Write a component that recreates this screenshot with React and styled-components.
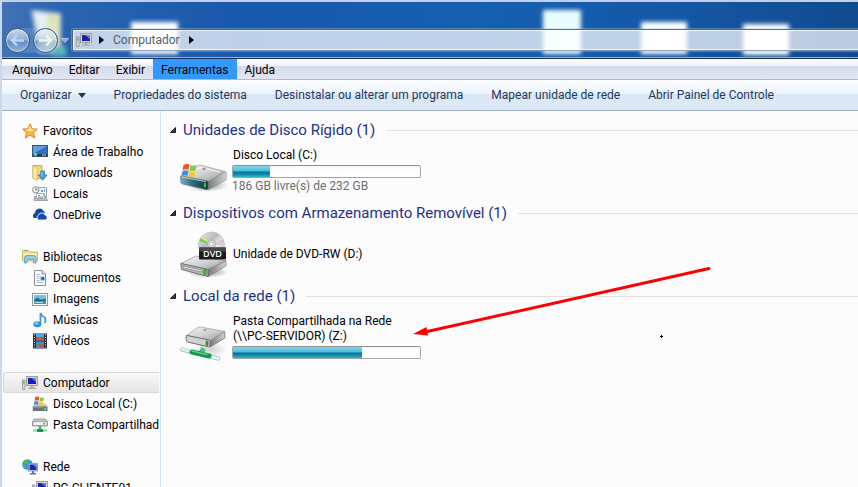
import React from "react";
import styled, { createGlobalStyle } from "styled-components";

const GlobalStyle = createGlobalStyle`
  * {
    box-sizing: border-box;
  }
  body {
    margin: 0;
    font-family: Roboto, "Open Sans", sans-serif;
    font-size: 12px;
    line-height: 15px;
    color: #000;
  }
  button {
    font: inherit;
    color: inherit;
    border: none;
    background: none;
    padding: 0;
  }
  a {
    color: inherit;
    text-decoration: none;
  }
  ul {
    list-style: none;
    margin: 0;
    padding: 0;
  }
  svg {
    display: block;
    flex: none;
  }
`;

const Janela = styled.div`
  display: flex;
  flex-direction: column;
  height: 100vh;
  overflow: hidden;
  border-top: 2px solid #c3cfe3;
  border-left: 2px solid #ccd9ed;
  background-color: #fcfcfc;
`;

const BarraTitulo = styled.header`
  position: relative;
  flex: none;
  padding: 25px 0 5px 3px;
  border-bottom: 1px solid #17304f;
  box-shadow: inset 0 -1px 0 #8db5e2;
  background: linear-gradient(90deg, #4372b5 0, #2a64b0 60px, #1858ad 240px, #1660b0 480px, #1558a8 660px, #114b8f 100%);
`;

const Fundo = styled.svg`
  position: absolute;
  left: 0;
  top: 0;
  width: 100%;
  height: 55px;
`;

const LinhaEndereco = styled.div`
  position: relative;
  display: flex;
  align-items: center;
  height: 26px;
`;

const Navegacao = styled.div`
  display: flex;
  align-items: center;
  gap: 3px;
  border-radius: 13px;
  background-color: rgba(150, 190, 230, 0.25);
`;

const BotaoNav = styled.button`
  display: flex;
  align-items: center;
  justify-content: center;
  width: 25px;
  height: 25px;
  border-radius: 50%;
  border: 1px solid #33557f;
  background: linear-gradient(
    rgba(240, 246, 252, 0.75),
    rgba(200, 218, 240, 0.5) 48%,
    rgba(120, 160, 205, 0.4) 52%,
    rgba(190, 220, 245, 0.55)
  );
  box-shadow: inset 0 0 0 1px rgba(255, 255, 255, 0.55);
`;

const BotaoHistorico = styled.button`
  display: flex;
  justify-content: center;
  width: 13px;
`;

const Endereco = styled.nav`
  display: flex;
  flex: 1;
  align-items: center;
  height: 22px;
  margin-left: 1px;
  padding-left: 3px;
  border: 1px solid rgba(20, 35, 50, 0.65);
  border-bottom-color: rgba(20, 50, 90, 0.45);
  border-right: none;
  border-radius: 2px 0 0 2px;
  background-color: rgba(255, 255, 255, 0.72);
  box-shadow: inset 1px 1px 0 rgba(255, 255, 255, 0.8), inset 0 -1px 0 rgba(255, 255, 255, 0.8),
    0 0 0 1px rgba(160, 200, 240, 0.4);
`;

const Caminho = styled.a`
  margin: 0 9px;
  color: #53606f;
`;

const SetaCaminho = styled.svg`
  margin-left: ${(props) => (props.$inicio ? "7px" : "0")};
`;

const BarraMenu = styled.nav`
  display: flex;
  flex: none;
  height: 21px;
  padding-left: 2px;
  border-bottom: 1px solid #b4bacb;
  background: linear-gradient(#fff, #eff1f9 7px, #d4daed 7px, #e3e7f5);
`;

const ItemMenu = styled.button`
  padding: 2px 8px 0;
  background-color: ${(props) => (props.$ativo ? "#3399ff" : "transparent")};
`;

const BarraComandos = styled.div`
  display: flex;
  flex: none;
  height: 31px;
  padding-left: 4px;
  border-bottom: 1px solid #a0afc3;
  background: linear-gradient(#fbfdff, #ecf4fc 14px, #dce7f5 14px, #dde9f7);
`;

const Comando = styled.button`
  display: flex;
  align-items: center;
  gap: 6px;
  padding: 0 14px;
  white-space: nowrap;
  color: #1e395b;
`;

const Corpo = styled.div`
  display: flex;
  flex: 1;
  min-height: 0;
`;

const Lateral = styled.nav`
  flex: none;
  width: 159px;
  padding: 9px 1px 0;
  overflow: hidden;
  line-height: 16px;
  border-right: 1px solid #d2e4f7;
`;

const Grupo = styled.ul`
  margin-bottom: 21px;
`;

const LinkLateral = styled.a`
  display: flex;
  align-items: center;
  gap: 5px;
  height: 21px;
  padding-top: 1px;
  padding-left: ${(props) => (props.$raiz ? "18px" : "28px")};
  overflow: hidden;
  white-space: nowrap;
  border: 1px solid ${(props) => (props.$ativo ? "#d9d9d9" : "transparent")};
  border-right: none;
  border-radius: 3px 0 0 3px;
  background: ${(props) => (props.$ativo ? "linear-gradient(#f8f8f8, #e5e5e5)" : "none")};
`;

const Conteudo = styled.main`
  position: relative;
  flex: 1;
  min-width: 0;
  padding: 9px 0 0 9px;
`;

const Secao = styled.section`
  height: 83px;
`;

const Titulo = styled.h2`
  display: flex;
  align-items: center;
  gap: 7px;
  height: 20px;
  margin: 0;
  font-size: 15px;
  font-weight: 400;
  line-height: 20px;
  color: #1e3287;
  white-space: nowrap;

  &::after {
    content: "";
    flex: 1;
    height: 1px;
    margin-left: 4px;
    background-color: #e2e2e2;
  }
`;

const Unidade = styled.a`
  display: flex;
  align-items: center;
  gap: 4px;
  width: 260px;
  height: 48px;
  margin: 7px 0 0 10px;
`;

const Detalhes = styled.div`
  width: 189px;
`;

const Nome = styled.div`
  padding-left: 1px;
`;

const Capacidade = styled.div`
  height: 13px;
  margin: 2px 0 1px;
  border: 1px solid #a5a5a5;
  border-top-color: #8f8f8f;
  border-radius: 2px;
  overflow: hidden;
  background: linear-gradient(#f6f6f6, #fff 4px);
`;

const Usado = styled.div`
  height: 100%;
  background: linear-gradient(#86d3e8, #45bddb 48%, #04708f 52%, #0d8bab 75%, #2db4d2);
`;

const Livre = styled.div`
  color: #6d6d6d;
`;

const Anotacao = styled.svg`
  position: absolute;
  left: 250px;
  top: 152px;
  pointer-events: none;
`;

const Cursor = styled(Anotacao)`
  left: 499px;
  top: 224px;
`;

function Icone({ tamanho = 16, children }) {
  return (
    <svg width={tamanho} height={tamanho} viewBox={`0 0 ${tamanho} ${tamanho}`} aria-hidden="true">
      {children}
    </svg>
  );
}

const Bandeira = () => (
  <>
    <path d="M1 2 Q4 0 7 1.6 L6 7 Q3.500 5.500 0 7z" fill="#e8562a" />
    <path d="M8 2 Q11 3.500 14 2 L13 7.500 Q10 9 7 7.300z" fill="#8cc63f" />
    <path d="M0 8 Q3 6.500 6 8 L5 13 Q2.500 11.500 -1 13z" fill="#3f8fd8" />
    <path d="M7 8.400 Q10 10 13 8.500 L12 13.500 Q9 15 6 13.500z" fill="#fbc62c" />
  </>
);

const IconeEstrela = () => (
  <Icone>
    <path d="M8 .8 L10.200 5.700 L15.400 6.200 L11.500 9.700 L12.800 15 L8 12.200 L3.200 15 L4.500 9.700 L.6 6.200 L5.800 5.700z" fill="#fdb83a" stroke="#e0862a" strokeLinejoin="round" />
    <path d="M8 2.500 L9.500 6.500 L13.500 7 L8 8.500 L3 7 L6.500 6.500z" fill="#ffe79a" />
  </Icone>
);

const IconeAreaTrabalho = () => (
  <Icone>
    <rect x=".5" y="1.500" width="15" height="11" fill="#2f6fc0" stroke="#40536e" />
    <path d="M1 2 H15 L1 10z" fill="#5f9fe0" />
    <rect x="1" y="10" width="14" height="2" fill="#22364f" />
    <circle cx="3.500" cy="10.500" r="1.800" fill="#43c3e8" />
    <path d="M3 10h1v1h-1z" fill="#f6d04a" />
    <path d="M10 11h4" stroke="#c7d7ea" />
  </Icone>
);

const IconeDownloads = () => (
  <Icone>
    <path d="M1 .5 H10 V13.500 H1z" fill="#f2d77a" stroke="#cfaa48" />
    <path d="M1 1 L5 2.500 V15.500 L1 13z" fill="#fbeeb4" stroke="#d3b155" strokeWidth=".7" />
    <path d="M8.800 6 H12.500 V10 H15 L10.700 15.300 L6.300 10 H8.800z" fill="#3e9fe0" stroke="#2174b8" strokeWidth=".8" />
    <path d="M10 6.500v5" stroke="#92d0f7" />
  </Icone>
);

const IconeLocais = () => (
  <Icone>
    <path d="M5.500 1.500 H14.500 V11 H5.500z" fill="#f4f6f8" stroke="#9aa2aa" />
    <path d="M2.500 10.500 H13.500 L15.500 14.500 H2z" fill="#b9bec4" stroke="#858b92" strokeWidth=".7" />
    <path d="M4.500 7.500h8v5h-8z" fill="#edf3f7" stroke="#8f99a3" strokeWidth=".7" />
    <path d="M6 9.500h2M6 11.200h5" stroke="#58a9a6" />
    <path d="M9 4h2v2h-2z" fill="#4fa8dd" />
    <path d="M12.500 3v3M12 8v2" stroke="#58a9dd" />
    <circle cx="3.800" cy="3.800" r="3.200" fill="#f3f3f3" stroke="#8c8c8c" />
    <path d="M3.800 2v2h1.700" fill="none" stroke="#555" strokeWidth=".8" />
  </Icone>
);

const IconeOneDrive = () => (
  <Icone>
    <path d="M1.800 11 A3 3 0 0 1 3 6 A4.500 4.500 0 0 1 11.500 4 A4 4 0 0 1 13 5.500 L8 11z" fill="#1549a0" />
    <path d="M6.500 13 A2.600 2.600 0 0 1 6.200 8.500 A3.600 3.600 0 0 1 12.800 7.800 A2.700 2.700 0 0 1 13.500 13z" fill="#0f4db0" stroke="#fcfcfc" strokeWidth=".9" />
  </Icone>
);

const IconeBibliotecas = () => (
  <Icone>
    <path d="M.5 1.500 H6.500 L7.500 3 H15.500 V12 H.5z" fill="#f6e193" stroke="#d9b656" />
    <path d="M2 1.700h4" stroke="#5cb85c" />
    <path d="M2 5.500h12" stroke="#fff6cf" />
    <path d="M2.500 14 V9.500 Q2.500 6.500 5 6.500 H11.500 Q14 6.500 14 9.500 V14 H11.500 V11.500 Q11.500 10.500 10.500 10.500 H6 Q5 10.500 5 11.500 V14z" fill="#8fcdf0" stroke="#4a9ccd" strokeWidth=".8" />
  </Icone>
);

const IconeDocumento = () => (
  <Icone>
    <path d="M2.500 .5 H10 L13.500 4 V15.500 H2.500z" fill="#fff" stroke="#8a8f96" />
    <path d="M10 .5 V4 H13.500" fill="#e1e5ea" stroke="#8a8f96" />
    <path d="M4.500 4.500h4M4.500 6.500h3M4.500 8.500h3M4.500 10.500h3M4.500 12.500h7" stroke="#a5b4c8" />
    <path d="M8.500 6.500h4v4h-4z" fill="#4f97d6" />
    <path d="M10 7.500h2v2h-2z" fill="#164a8c" />
  </Icone>
);

const IconeImagem = () => (
  <Icone>
    <rect x=".5" y="2.500" width="15" height="12" fill="#fff" stroke="#8f959c" />
    <rect x="2" y="4" width="12" height="9" fill="#6cc3ef" />
    <path d="M2 9 L5 6.500 L9 8.500 L14 7.500 V10 H2z" fill="#26757a" />
    <path d="M2 10h12v3H2z" fill="#3c8fc4" />
    <path d="M3 11.500h8" stroke="#b6e0f3" />
  </Icone>
);

const IconeMusica = () => (
  <Icone>
    <path d="M8.500 12 V1 Q10 4.500 12.500 5.500 Q14.500 7.500 12.500 11" fill="none" stroke="#3f97d6" strokeWidth="1.800" />
    <ellipse cx="5.300" cy="12.300" rx="4" ry="3" fill="#2f8fd5" />
    <ellipse cx="4.600" cy="11.500" rx="2" ry="1.200" fill="#8bcaf2" />
  </Icone>
);

const IconeVideo = () => (
  <Icone>
    <rect x="1" y=".5" width="14" height="15" fill="#2b2f35" />
    <rect x="4" y="1" width="8" height="6.500" fill="#5aa4dd" />
    <rect x="4" y="8.500" width="8" height="6.500" fill="#4390cf" />
    <path d="M4 3 L7 5 L10 3.500 L12 5 V7.500 H9 L7 6 L5 7.500 H4zM5 10 L8 12 L11 10 L12 13 L9 15 L7 13z" fill="#b8573f" />
    <path d="M2.500 1.500v13M13.500 1.500v13" stroke="#f0f0f0" strokeDasharray="1 1.500" />
  </Icone>
);

const IconeComputador = () => (
  <Icone>
    <rect x=".5" y="5" width="2.500" height="9.500" fill="#d5d8da" stroke="#85898c" strokeWidth=".7" />
    <path d="M1 6.500h1.500v2h-1.500z" fill="#57b947" />
    <rect x="4.500" y="1.500" width="11" height="9" fill="#d9d6cf" stroke="#a29f98" />
    <rect x="6" y="3" width="8" height="6" fill="#1022b4" />
    <path d="M9 3 H14 V7z" fill="#5e7fea" />
    <path d="M8.500 11h3v1.500h2.500v1.500h-8v-1.500h2.500z" fill="#b1aea7" />
  </Icone>
);

const IconeDisco = () => (
  <Icone>
    <path d="M1 10 L4 7.500 H13 L15.500 10 V15 H1z" fill="#c5cacd" />
    <path d="M.8 10.500h14.500v4.500h-14.500z" fill="#66757e" />
    <path d="M2 11.500h9" stroke="#59a2aa" />
    <path d="M12 12h2v2h-2z" fill="#5be03d" />
    <g transform="translate(2.500 0) scale(.68)">
      <Bandeira />
    </g>
  </Icone>
);

const IconePastaRede = () => (
  <Icone>
    <path d="M2.500 2 H13.500 L15.500 4.500 V9 H.5 V4.500z" fill="#c3c7ca" stroke="#7f858a" strokeWidth=".7" />
    <rect x="1" y="4.500" width="14" height="4" rx="1" fill="#f1f2f3" stroke="#8b9196" strokeWidth=".7" />
    <path d="M11.500 5.500h1.500v2h-1.500z" fill="#36b52a" />
    <path d="M8 9v4" stroke="#38b36c" strokeWidth="2.500" />
    <path d="M1 13.500h14" stroke="#7ed3a0" strokeWidth="2" />
    <path d="M5 13.500h6" stroke="#169a4d" strokeWidth="3" />
  </Icone>
);

const IconeRede = () => (
  <Icone>
    <circle cx="5.500" cy="5.500" r="5.300" fill="#3d94de" />
    <path d="M2 1.500 Q6 0 7 1.500 L5 4.500 L2 5.500 L3.500 9 L1.500 8.500 Q-.8 4.500 2 1.500zM6 6l3-1v3l-3 3z" fill="#4fba4c" />
    <rect x="6.500" y="4.500" width="9" height="7.500" fill="#d7dbe2" stroke="#7d8ba3" strokeWidth=".8" />
    <rect x="7.500" y="5.500" width="7" height="5.500" fill="#1529bd" />
    <path d="M11 5.500h3.500v3z" fill="#6f92f0" />
    <path d="M10 12h2v2h2v1.500h-6v-1.500h2z" fill="#5275ad" />
  </Icone>
);

const Degrades = () => (
  <defs>
    <linearGradient id="tampa" x1="0" y1="0" x2="1" y2="1">
      <stop offset="0" stopColor="#f6f6f6" />
      <stop offset=".5" stopColor="#d0d2d3" />
      <stop offset="1" stopColor="#97999b" />
    </linearGradient>
    <linearGradient id="lado" x1="0" y1="0" x2="1" y2="0">
      <stop offset="0" stopColor="#77797b" />
      <stop offset="1" stopColor="#d0d2d3" />
    </linearGradient>
    <linearGradient id="frente" x1="0" y1="0" x2="1" y2="0">
      <stop offset="0" stopColor="#7fb0ba" />
      <stop offset=".45" stopColor="#2d6a78" />
      <stop offset="1" stopColor="#103440" />
    </linearGradient>
    <radialGradient id="sombra">
      <stop offset="0" stopColor="#000" stopOpacity=".45" />
      <stop offset="1" stopColor="#000" stopOpacity="0" />
    </radialGradient>
    <linearGradient id="midia" x1="0" y1="0" x2="1" y2="1">
      <stop offset="0" stopColor="#f3f3f3" />
      <stop offset=".4" stopColor="#b8babb" />
      <stop offset=".6" stopColor="#ececec" />
      <stop offset="1" stopColor="#a5a7a8" />
    </linearGradient>
  </defs>
);

const DiscoLocalGrande = () => (
  <Icone tamanho={48}>
    <Degrades />
    <ellipse cx="27" cy="38" rx="21" ry="7" fill="url(#sombra)" />
    <path d="M28 34 L45 24.500 Q47 25 46.500 28 L46 33 L28 43z" fill="url(#lado)" stroke="#8c8f91" strokeWidth=".6" />
    <path d="M1 29 L18 18.500 Q19 18 21 18.300 L45 24.500 L28 34.500z" fill="url(#tampa)" stroke="#8b8d8f" strokeWidth=".6" />
    <path d="M8 27 L20 20.500 L40 25" fill="none" stroke="#fff" strokeWidth="1" opacity=".8" />
    <path d="M.6 29.500 Q.5 28.800 2 29 L27 33.800 Q28.500 34.200 28.400 36 L28 42 Q28 43 26.500 42.700 L2.500 37 Q1 36.600 .8 35z" fill="url(#frente)" stroke="#647a82" strokeWidth=".7" />
    <path d="M2 30 L26 34.700" stroke="#d4e6e9" strokeWidth="1" opacity=".8" />
    <rect x="23.800" y="35.500" width="2.400" height="5" rx="1" fill="#53e22d" stroke="#10320d" strokeWidth=".6" />
    <ellipse cx="24" cy="22" rx="2" ry=".8" fill="#777" />
    <g transform="translate(2.500 16)">
      <Bandeira />
    </g>
  </Icone>
);

const DvdGrande = () => (
  <Icone tamanho={48}>
    <Degrades />
    <ellipse cx="27" cy="42" rx="21" ry="6" fill="url(#sombra)" />
    <path d="M28 39 L46 30.500 L46 36 L28 46.500z" fill="url(#lado)" stroke="#6c6f71" strokeWidth=".6" />
    <path d="M1 33.500 L16 26 L46 30.500 L28 39.500z" fill="url(#tampa)" stroke="#7b7d7f" strokeWidth=".6" />
    <path d="M.8 33.500 L28 39.500 V46.500 L1.500 39.500z" fill="#b5b7b8" stroke="#5d5f60" strokeWidth=".8" />
    <path d="M3 36 L22 40.300 V42 L3 37.800z" fill="#f1f1f1" stroke="#707273" strokeWidth=".6" />
    <rect x="23.800" y="39.500" width="2.400" height="5" rx="1" fill="#4ede2a" stroke="#10320d" strokeWidth=".5" />
    <circle cx="31.500" cy="15" r="13" fill="url(#midia)" stroke="#b0b2b3" strokeWidth=".6" />
    <path d="M31.500 15 L19.200 11 L21 8z" fill="#5fdc4a" />
    <path d="M31.500 15 L21 8 L23 6z" fill="#e9e36a" opacity=".8" />
    <path d="M31.500 15 L43 9 L44 12z" fill="#ecb7bd" />
    <path d="M31.500 15 L44 12 L44.400 15z" fill="#b9d9e6" />
    <circle cx="31.500" cy="14" r="4" fill="#dcdede" stroke="#9a9c9d" strokeWidth=".7" />
    <circle cx="31.500" cy="14" r="1.800" fill="#fff" stroke="#999" strokeWidth=".5" />
    <rect x="19" y="17.500" width="27" height="12" rx="1" fill="#1c1c1c" />
    <path d="M19 17.500h27v4h-27z" fill="#484848" />
    <text x="32.500" y="27" textAnchor="middle" fontFamily="Open Sans, sans-serif" fontSize="9" fontWeight="600" fill="#fff">
      DVD
    </text>
  </Icone>
);

const RedeGrande = () => (
  <Icone tamanho={48}>
    <Degrades />
    <ellipse cx="30" cy="36" rx="17" ry="8" fill="url(#sombra)" opacity=".4" />
    <path d="M30 27.500 L44.500 18.500 L45 25 L30 34z" fill="url(#lado)" stroke="#67696b" strokeWidth=".7" />
    <path d="M6.500 22.500 L18 14.300 Q19 13.700 20.500 14 L44.500 18.500 L30 28z" fill="url(#tampa)" stroke="#8b8d8f" strokeWidth=".6" />
    <path d="M6 23.500 Q6 22.300 7.500 22.500 L29 27 Q30.300 27.300 30.300 29 L30 33 Q30 34 28.500 33.800 L8 29.200 Q6.500 28.800 6.300 27.500z" fill="#d0d1d1" stroke="#5f6163" strokeWidth=".9" />
    <rect x="26" y="28" width="2.200" height="4.500" rx="1" fill="#2fae22" stroke="#174a12" strokeWidth=".5" />
    <ellipse cx="25" cy="17" rx="2" ry=".8" fill="#888" />
    <path d="M2 36.500 L10 38.800" stroke="#aebdc0" strokeWidth="4" strokeLinecap="round" />
    <path d="M2 36.300 L10 38.600" stroke="#edf4f4" strokeWidth="2.400" strokeLinecap="round" />
    <path d="M31 43.300 L38 45.500" stroke="#aebdc0" strokeWidth="4.400" strokeLinecap="round" />
    <path d="M31 43.300 L38 45.500" stroke="#edf4f4" strokeWidth="2.800" strokeLinecap="round" />
    <path d="M24 35.500 L20 41" stroke="#4cc07a" strokeWidth="5" />
    <path d="M12 39 L29 43" stroke="#129a48" strokeWidth="5" strokeLinecap="round" />
    <path d="M12 38 L27 41.500" stroke="#5ad08b" strokeWidth="1.600" strokeLinecap="round" />
  </Icone>
);

const menus = ["Arquivo", "Editar", "Exibir", "Ferramentas", "Ajuda"];

const comandos = [
  "Organizar",
  "Propriedades do sistema",
  "Desinstalar ou alterar um programa",
  "Mapear unidade de rede",
  "Abrir Painel de Controle",
];

const grupos = [
  [
    ["Favoritos", IconeEstrela],
    ["Área de Trabalho", IconeAreaTrabalho],
    ["Downloads", IconeDownloads],
    ["Locais", IconeLocais],
    ["OneDrive", IconeOneDrive],
  ],
  [
    ["Bibliotecas", IconeBibliotecas],
    ["Documentos", IconeDocumento],
    ["Imagens", IconeImagem],
    ["Músicas", IconeMusica],
    ["Vídeos", IconeVideo],
  ],
  [
    ["Computador", IconeComputador],
    ["Disco Local (C:)", IconeDisco],
    ["Pasta Compartilhada na Rede", IconePastaRede],
  ],
  [
    ["Rede", IconeRede],
    ["PC-CLIENTE01", IconeComputador],
  ],
];

const secoes = [
  {
    titulo: "Unidades de Disco Rígido (1)",
    nome: "Disco Local (C:)",
    icone: DiscoLocalGrande,
    usado: 20,
    livre: "186 GB livre(s) de 232 GB",
  },
  {
    titulo: "Dispositivos com Armazenamento Removível (1)",
    nome: "Unidade de DVD-RW (D:)",
    icone: DvdGrande,
  },
  {
    titulo: "Local da rede (1)",
    nome: "Pasta Compartilhada na Rede (\\\\PC-SERVIDOR) (Z:)",
    icone: RedeGrande,
    usado: 69,
  },
];

function Seta({ inicio }) {
  return (
    <SetaCaminho $inicio={inicio} width="5" height="8" viewBox="0 0 5 8" aria-hidden="true">
      <path d="M0 0 L5 4 L0 8z" fill="#000" />
    </SetaCaminho>
  );
}

function Topo() {
  return (
    <BarraTitulo>
      <Fundo aria-hidden="true">
        <defs>
          <filter id="vidro" x="-30%" y="-30%" width="160%" height="160%">
            <feGaussianBlur stdDeviation="2.200" />
          </filter>
        </defs>
        <g filter="url(#vidro)">
          <path d="M29 8 L59 11 V51 H37z" fill="#b9cdd0" />
          <path d="M31 9 L45 11 V30 L37 36z" fill="#e6f0f2" />
          <path d="M45 12h13v32h-13z" fill="#e0e4bd" />
          <path d="M50 44h14v10h-14z" fill="#5db5c0" />
          <rect x="129" y="20" width="47" height="32" fill="#fff" />
          <rect x="541" y="8" width="38" height="44" fill="#e9fcff" />
          <rect x="639" y="20" width="46" height="32" fill="#fff" />
          <rect x="741" y="22" width="46" height="31" fill="#fff" />
        </g>
      </Fundo>
      <LinhaEndereco>
        <Navegacao>
          <BotaoNav aria-label="Voltar">
            <svg width="15" height="13" viewBox="0 0 15 13">
              <path d="M14 6.500 H2 M7 1.500 L2 6.500 L7 11.500" fill="none" stroke="#bdd5f0" strokeWidth="2.400" />
            </svg>
          </BotaoNav>
          <BotaoNav aria-label="Avançar">
            <svg width="15" height="13" viewBox="0 0 15 13">
              <path d="M1 6.500 H13 M8 1.500 L13 6.500 L8 11.500" fill="none" stroke="#eff4ec" strokeWidth="2.400" />
            </svg>
          </BotaoNav>
        </Navegacao>
        <BotaoHistorico aria-label="Histórico">
          <svg width="8" height="5" viewBox="0 0 8 5">
            <path d="M.5 .5 H7.500 L4 4.500z" fill="#7fb0de" stroke="#c5dcf2" strokeWidth=".7" />
          </svg>
        </BotaoHistorico>
        <Endereco aria-label="Endereço">
          <IconeComputador />
          <Seta inicio />
          <Caminho href="#computador">Computador</Caminho>
          <Seta />
        </Endereco>
      </LinhaEndereco>
    </BarraTitulo>
  );
}

function App() {
  return (
    <>
      <GlobalStyle />
      <Janela>
        <Topo />
        <BarraMenu>
          {menus.map((menu) => (
            <ItemMenu key={menu} $ativo={menu === "Ferramentas"}>
              {menu}
            </ItemMenu>
          ))}
        </BarraMenu>
        <BarraComandos>
          {comandos.map((comando) => (
            <Comando key={comando}>
              {comando}
              {comando === "Organizar" && (
                <svg width="8" height="5" viewBox="0 0 8 5" aria-hidden="true">
                  <path d="M0 0 H8 L4 5z" fill="#1e395b" />
                </svg>
              )}
            </Comando>
          ))}
        </BarraComandos>
        <Corpo>
          <Lateral>
            {grupos.map((grupo) => (
              <Grupo key={grupo[0][0]}>
                {grupo.map(([nome, Desenho], indice) => (
                  <li key={nome}>
                    <LinkLateral href="#" $raiz={indice === 0} $ativo={nome === "Computador"}>
                      <Desenho />
                      {nome}
                    </LinkLateral>
                  </li>
                ))}
              </Grupo>
            ))}
          </Lateral>
          <Conteudo>
            {secoes.map(({ titulo, nome, icone: Desenho, usado, livre }) => (
              <Secao key={titulo}>
                <Titulo>
                  <svg width="6" height="6" viewBox="0 0 6 6" aria-hidden="true">
                    <path d="M5.500 .5 V5.500 H.5z" fill="#404040" stroke="#1c1c1c" />
                  </svg>
                  {titulo}
                </Titulo>
                <Unidade href="#">
                  <Desenho />
                  <Detalhes>
                    <Nome>{nome}</Nome>
                    {usado && (
                      <Capacidade role="meter" aria-label={nome} aria-valuenow={usado}>
                        <Usado style={{ width: `${usado}%` }} />
                      </Capacidade>
                    )}
                    {livre && <Livre>{livre}</Livre>}
                  </Detalhes>
                </Unidade>
              </Secao>
            ))}
            <Anotacao width="304" height="80" viewBox="0 0 304 80" aria-hidden="true">
              <path d="M298 5.500 L14 69" stroke="#fe0000" strokeWidth="3" strokeLinecap="round" />
              <path d="M2 71 L15.500 64 L17 72.500z" fill="#fe0000" />
            </Anotacao>
            <Cursor width="3" height="3" viewBox="0 0 3 3" aria-hidden="true">
              <path d="M1 0h1v1h1v1h-1v1h-1v-1h-1v-1h1z" fill="#000" />
            </Cursor>
          </Conteudo>
        </Corpo>
      </Janela>
    </>
  );
}

export default App;
